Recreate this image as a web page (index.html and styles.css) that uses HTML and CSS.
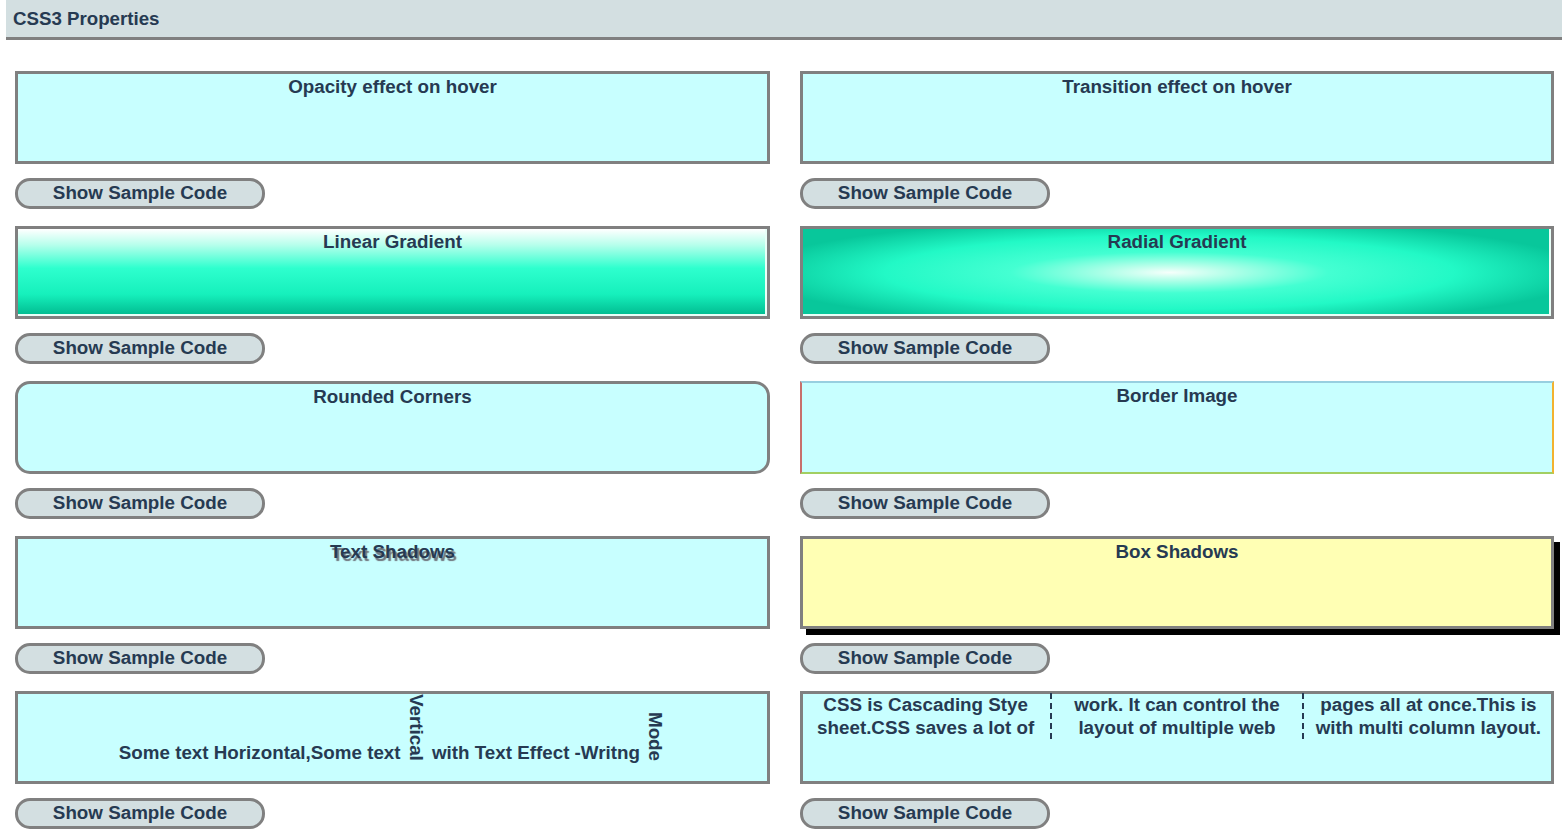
FILE: index.html
```html
<!DOCTYPE html>
<html>
<head>
<meta charset="utf-8">
<title>CSS3 Properties</title>
<link rel="stylesheet" href="styles.css">
</head>
<body>
<div class="header">CSS3 Properties</div>
<div class="grid">
  <div class="cell">
    <div class="box plain"><div class="title">Opacity effect on hover</div></div>
    <button class="btn">Show Sample Code</button>
  </div>
  <div class="cell">
    <div class="box plain"><div class="title">Transition effect on hover</div></div>
    <button class="btn">Show Sample Code</button>
  </div>
  <div class="cell">
    <div class="box linear"><div class="title">Linear Gradient</div></div>
    <button class="btn">Show Sample Code</button>
  </div>
  <div class="cell">
    <div class="box radial"><div class="title">Radial Gradient</div></div>
    <button class="btn">Show Sample Code</button>
  </div>
  <div class="cell">
    <div class="box plain rounded"><div class="title">Rounded Corners</div></div>
    <button class="btn">Show Sample Code</button>
  </div>
  <div class="cell">
    <div class="box bimage"><div class="title">Border Image</div></div>
    <button class="btn">Show Sample Code</button>
  </div>
  <div class="cell">
    <div class="box plain"><div class="title tshadow">Text Shadows</div></div>
    <button class="btn">Show Sample Code</button>
  </div>
  <div class="cell">
    <div class="box bshadow"><div class="title">Box Shadows</div></div>
    <button class="btn">Show Sample Code</button>
  </div>
  <div class="cell">
    <div class="box plain vmode"><div class="vline">Some text Horizontal,Some text <span class="vert">Vertical</span> with Text Effect -Writng <span class="vert">Mode</span></div></div>
    <button class="btn">Show Sample Code</button>
  </div>
  <div class="cell">
    <div class="box plain multi"><div class="cols">CSS is Cascading Stye sheet.CSS saves a lot of work. It can control the layout of multiple web pages all at once.This is with multi column layout.</div></div>
    <button class="btn">Show Sample Code</button>
  </div>
</div>
</body>
</html>
```

FILE: styles.css
```css
html, body {
  margin: 0;
  padding: 0;
  background: #ffffff;
  font-family: "Liberation Sans", Arial, sans-serif;
  color: #263a52;
}

.header {
  margin-left: 6px;
  height: 37px;
  line-height: 37px;
  padding-left: 7px;
  background: #d3dfe1;
  border-bottom: 3px solid #808080;
  font-weight: bold;
  font-size: 18.7px;
}

.grid {
  display: grid;
  grid-template-columns: 755px 754px;
  column-gap: 30px;
  padding: 31px 0 0 15px;
}

.cell {
  display: flex;
  flex-direction: column;
  align-items: flex-start;
  height: 155px;
}

.box {
  box-sizing: border-box;
  width: 100%;
  height: 93px;
  border: 3px solid #808080;
  text-align: center;
}

.plain {
  background: #c8ffff;
}

.title {
  font-weight: bold;
  font-size: 18.8px;
  padding-top: 2px;
  line-height: 22px;
}

.linear {
  background: linear-gradient(to bottom, #ffffff 0%, #b8ffec 18%, #2effce 45%, #16f0bc 75%, #00b98e 100%);
  box-shadow: inset -2px -2px 0 #e8fff8;
}

.radial {
  background: radial-gradient(ellipse 56% 62% at 49% 50%, #f6fffb 0%, #b4ffe9 14%, #44ffd2 38%, #22f9c6 68%, #08c79b 100%);
  box-shadow: inset -2px -2px 0 #e8fff8;
}

.rounded {
  border-radius: 15px;
}

.bimage {
  background: #c8ffff;
  border-width: 2px;
  border-style: solid;
  border-color: #98cfe0 #f2b230 #a2cf62 #c8706c;
}

.tshadow {
  text-shadow: 2px 3px 1px #6f747c;
}

.bshadow {
  background: #ffffb4;
  box-shadow: 6px 6px 0 #000000;
}

.vmode {
  display: flex;
  align-items: flex-start;
  justify-content: center;
}

.vline {
  font-weight: bold;
  font-size: 18.8px;
  line-height: 18px;
}

.vert {
  display: inline-block;
  writing-mode: vertical-rl;
  line-height: 21px;
  vertical-align: -2px;
}

.multi {
  padding: 0 8px;
}

.cols {
  column-count: 3;
  column-gap: 22px;
  column-rule: 2px dashed #263a52;
  font-weight: bold;
  font-size: 18.8px;
  line-height: 23px;
  text-align: center;
  height: 46px;
  margin-top: -1px;
}

.btn {
  box-sizing: border-box;
  margin-top: 14px;
  width: 250px;
  height: 31px;
  border: 3px solid #808080;
  border-radius: 15px;
  background: #d3dfe1;
  color: #263a52;
  font-family: "Liberation Sans", Arial, sans-serif;
  font-weight: bold;
  font-size: 18.8px;
  padding: 0 0 2px 0;
  line-height: 22px;
}
```
